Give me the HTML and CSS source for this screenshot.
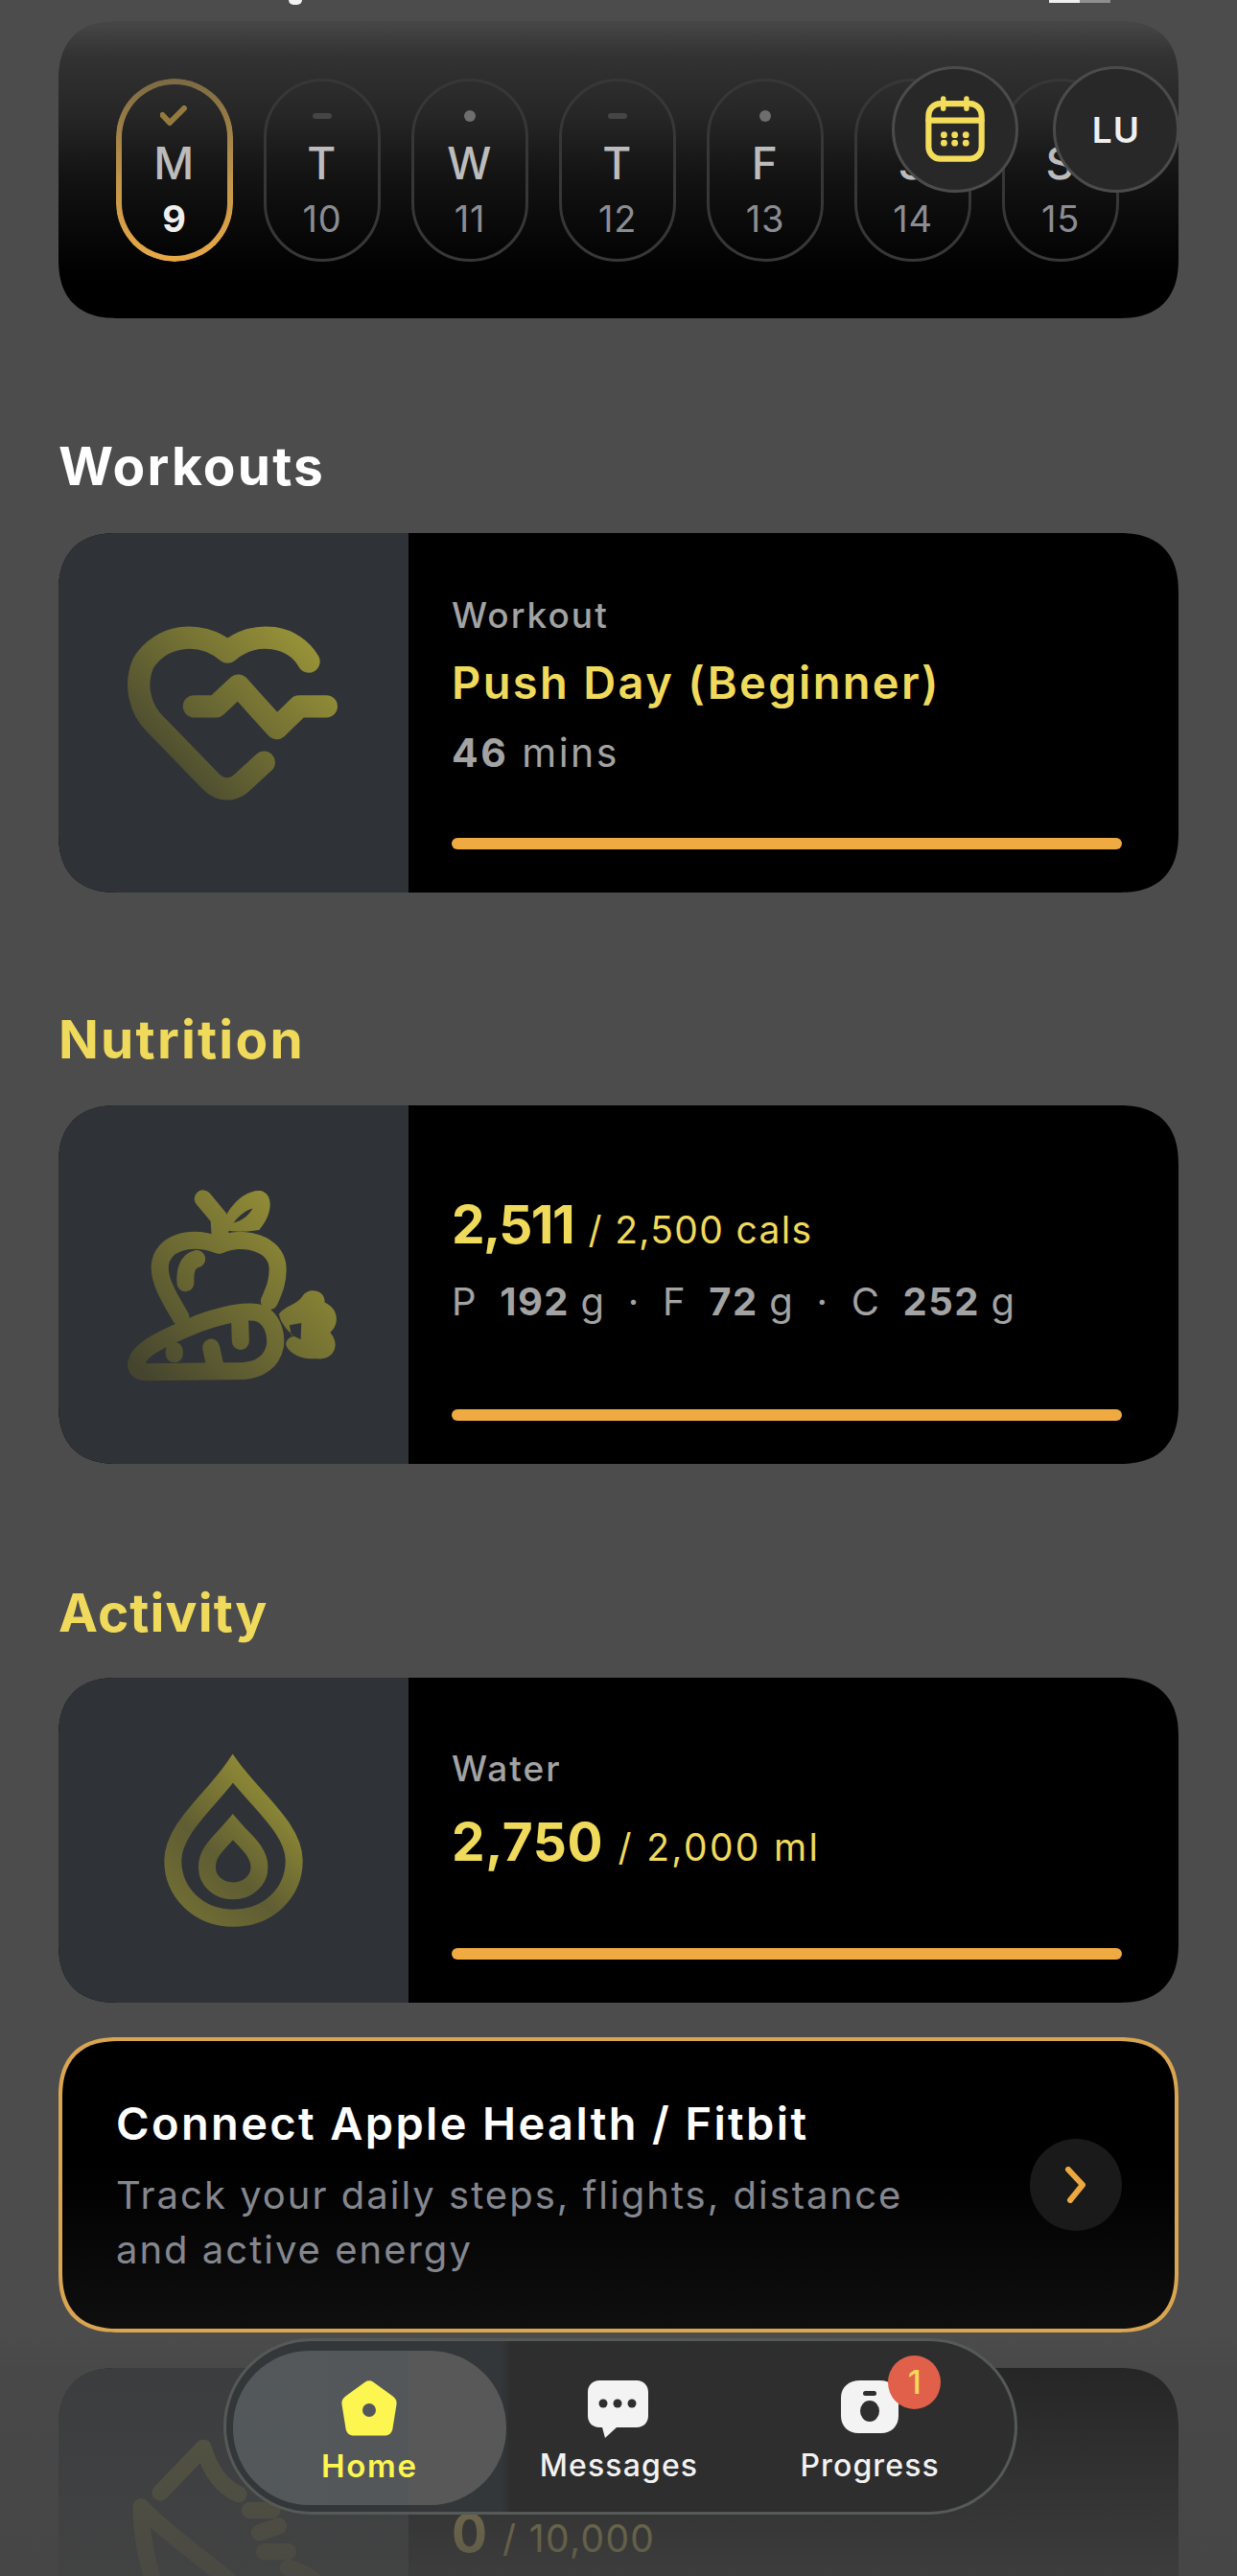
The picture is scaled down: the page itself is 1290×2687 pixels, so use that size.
FILE: index.html
```html
<!DOCTYPE html>
<html lang="en">
<head>
<meta charset="utf-8">
<title>Home</title>
<link rel="stylesheet" href="styles.css">
</head>
<body>
<div class="page">
  <svg width="0" height="0" class="defs" aria-hidden="true">
    <defs>
      <linearGradient id="oliveHeart" gradientUnits="userSpaceOnUse" x1="880" y1="400" x2="400" y2="860"><stop offset="0" stop-color="#9a9438"/><stop offset="1" stop-color="#44452f"/></linearGradient>
      <linearGradient id="oliveFood" gradientUnits="userSpaceOnUse" x1="800" y1="420" x2="330" y2="880"><stop offset="0" stop-color="#8f8a36"/><stop offset="1" stop-color="#45452f"/></linearGradient>
      <linearGradient id="oliveDrop" gradientUnits="userSpaceOnUse" x1="790" y1="430" x2="470" y2="760"><stop offset="0" stop-color="#8f8a36"/><stop offset="0.6" stop-color="#5f5d33"/><stop offset="1" stop-color="#6f6c34"/></linearGradient>
    </defs>
  </svg>

  <div class="status-a"></div><div class="status-b"></div><div class="status-c"></div>

  <main class="content">
    <section class="week">
      <div class="day day-active">
        <span class="day-mark"><svg width="30" height="22" viewBox="0 0 30 22"><path d="M2.500 10 L10 18 L25 3" class="check"/></svg></span>
        <span class="day-letter">M</span><span class="day-num day-num-active">9</span>
      </div>
      <div class="day"><span class="day-mark"><i class="dash"></i></span><span class="day-letter">T</span><span class="day-num">10</span></div>
      <div class="day"><span class="day-mark"><i class="dot"></i></span><span class="day-letter">W</span><span class="day-num">11</span></div>
      <div class="day"><span class="day-mark"><i class="dash"></i></span><span class="day-letter">T</span><span class="day-num">12</span></div>
      <div class="day"><span class="day-mark"><i class="dot"></i></span><span class="day-letter">F</span><span class="day-num">13</span></div>
      <div class="day"><span class="day-mark"></span><span class="day-letter">S</span><span class="day-num">14</span></div>
      <div class="day"><span class="day-mark"></span><span class="day-letter">S</span><span class="day-num">15</span></div>
    </section>

    <h2 class="heading heading-first">Workouts</h2>
    <article class="card card-workout">
      <div class="card-art">
        <svg class="art-heart" viewBox="270 330 680 560">
          <path class="art-line stroke-heart" d="M845 450 C800 370 680 345 592 420 C500 345 380 370 328 455 C300 520 315 600 370 650 L540 825 C570 855 610 855 640 825 L705 765"/>
          <path class="art-line stroke-heart" d="M487 590 H555 L625 525 L745 658 L815 590 H900"/>
        </svg>
      </div>
      <div class="card-body">
        <p class="label label-workout">Workout</p>
        <p class="title">Push Day (Beginner)</p>
        <p class="meta meta-mins"><b>46</b> mins</p>
        <div class="bar"></div>
      </div>
    </article>

    <h2 class="heading heading-gold heading-nutrition">Nutrition</h2>
    <article class="card card-nutrition">
      <div class="card-art">
        <svg class="art-food" viewBox="270 290 680 620">
          <g class="art-line stroke-food">
            <path d="M445 700 C410 640 378 590 380 540 C385 470 470 440 565 475 C640 440 745 470 748 545 C750 590 735 620 722 650"/>
            <path d="M515 330 L565 390 L570 470"/>
            <path d="M495 518 C465 525 458 560 460 593"/>
            <path d="M310 835 C320 800 400 760 500 720 C570 695 640 680 680 685 C730 695 745 750 740 790 C730 840 690 865 640 868 L340 872 C310 872 300 855 310 835 Z"/>
            <path d="M425 815 L425 805"/>
            <path d="M540 795 L552 850"/>
            <path d="M630 715 L632 775"/>
          </g>
          <path class="fill-food" fill-rule="evenodd" d="M570 425 C590 350 650 300 695 305 C735 315 735 375 690 428 C650 435 600 435 570 425 Z M610 405 C630 380 650 365 670 360 C655 385 635 400 610 405 Z"/>
          <path class="fill-food" fill-rule="evenodd" d="M752 690 C770 665 810 660 825 635 C845 605 898 615 895 655 C935 670 945 720 912 748 C945 785 925 835 870 830 C830 832 790 820 775 790 C770 775 785 760 800 760 C780 745 755 715 752 690 Z M785 725 L822 718 L820 770 L790 755 Z"/>
        </svg>
      </div>
      <div class="card-body">
        <p class="value value-nutrition"><b class="num-tight">2,511</b> <span>/ 2,500 cals</span></p>
        <p class="meta meta-macros">P&nbsp; <b>192</b> g &nbsp;·&nbsp; F&nbsp; <b>72</b> g &nbsp;·&nbsp; C&nbsp; <b>252</b> g</p>
        <div class="bar"></div>
      </div>
    </article>

    <h2 class="heading heading-gold heading-activity">Activity</h2>
    <article class="card card-water">
      <div class="card-art">
        <svg class="art-drop" viewBox="380 255 460 565">
          <path class="drop-line" d="M608 312 C540 410 420 500 420 600 C420 700 500 780 610 780 C720 780 800 700 800 600 C800 500 680 410 608 312 Z"/>
          <path class="drop-line" d="M608 495 C570 540 527 570 527 620 C527 665 565 695 608 695 C652 695 691 665 691 620 C691 570 646 540 608 495 Z"/>
        </svg>
      </div>
      <div class="card-body">
        <p class="label label-water">Water</p>
        <p class="value value-water"><b>2,750</b> <span>/ 2,000 ml</span></p>
        <div class="bar"></div>
      </div>
    </article>

    <article class="connect">
      <div class="connect-text">
        <p class="connect-title">Connect Apple Health / Fitbit</p>
        <p class="connect-sub">Track your daily steps, flights, distance<br>and active energy</p>
      </div>
      <div class="connect-go">
        <svg width="24" height="38" viewBox="0 0 24 38"><path class="chev" d="M4 3 L19 19 L6 35"/></svg>
      </div>
    </article>

    <article class="card card-steps">
      <div class="card-art card-art-top">
        <svg class="art-shoe" viewBox="389 345 680 672">
          <g class="art-line stroke-shoe">
            <path d="M500 510 L635 370 C655 440 690 490 745 515"/>
            <path d="M440 555 C520 640 640 720 720 790"/>
            <path d="M780 565 H850"/><path d="M810 635 L870 615"/><path d="M825 695 H900"/>
            <path d="M900 745 C950 760 1000 790 1020 830 C1050 900 1040 960 980 970 L640 970 C500 960 440 700 440 555"/>
          </g>
        </svg>
      </div>
      <div class="card-body">
        <p class="label label-steps">Steps</p>
        <p class="value value-steps"><b>0</b> <span>/ 10,000</span></p>
      </div>
    </article>
  </main>

  <div class="fade"></div>

  <button class="float float-cal" type="button" aria-label="Calendar">
    <svg width="64" height="70" viewBox="345 183 186 205">
      <rect x="357" y="207" width="162" height="168" rx="36" class="cal-line"/>
      <path d="M357 258 H519" class="cal-line"/>
      <path d="M402 192 V222 M473 192 V222" class="cal-line cal-ring"/>
      <g class="cal-dots"><circle cx="404" cy="302" r="10"/><circle cx="437" cy="302" r="10"/><circle cx="471" cy="302" r="10"/><circle cx="404" cy="327" r="10"/><circle cx="437" cy="327" r="10"/><circle cx="471" cy="327" r="10"/></g>
    </svg>
  </button>
  <button class="float float-user" type="button">LU</button>

  <nav class="nav">
    <a class="nav-item nav-home">
      <span class="nav-icon">
        <svg width="58" height="58" viewBox="0 0 58 58"><path class="home-shape" fill-rule="evenodd" d="M25 1.500 C27.500 -0.300 30.500 -0.300 33 1.500 L53 16 C56.500 18.500 58 21 57.500 25 L53.500 50 C52.800 55 49.500 57.500 45 57.500 L13 57.500 C8.500 57.500 5.200 55 4.500 50 L0.500 25 C0 21 1.500 18.500 5 16 Z M29 24 A7 7 0 1 0 29 38 A7 7 0 1 0 29 24 Z"/></svg>
      </span>
      <span class="nav-label nav-label-home">Home</span>
    </a>
    <a class="nav-item nav-msg">
      <span class="nav-icon">
        <svg width="64" height="60" viewBox="0 0 64 60"><path class="nav-white" d="M12 0 H51 C58 0 63 5 63 12 V37 C63 44 58 49 51 49 H30 L18 60 L15 49 H12 C5 49 0 44 0 37 V12 C0 5 5 0 12 0 Z"/><g class="nav-dark"><circle cx="16" cy="24" r="4.500"/><circle cx="31" cy="24" r="4.500"/><circle cx="46" cy="24" r="4.500"/></g></svg>
      </span>
      <span class="nav-label">Messages</span>
    </a>
    <a class="nav-item nav-progress">
      <span class="nav-icon">
        <svg width="60" height="55" viewBox="0 0 60 55"><path class="nav-white" d="M20 0 H40 C52 0 60 7 60 18 V37 C60 48 52 55 42 55 H18 C8 55 0 48 0 37 V18 C0 7 8 0 20 0 Z"/><g class="nav-dark"><rect x="23" y="11" width="14" height="5" rx="2.500"/><ellipse cx="30" cy="32" rx="10" ry="11"/></g></svg>
      </span>
      <span class="nav-label">Progress</span>
      <span class="badge">1</span>
    </a>
  </nav>
</div>
</body>
</html>
```
FILE: styles.css
```css
* { box-sizing: border-box; }
html, body { margin: 0; padding: 0; background: #4c4c4c; }
body { font-family: Inter, "Liberation Sans", sans-serif; }
p, h2 { margin: 0; }
.defs { position: absolute; }

.page { position: relative; width: 1290px; height: 2687px; overflow: hidden; background: #4c4c4c; }
.content { padding: 22px 61px 0; }

.status-a, .status-b, .status-c { position: absolute; top: 0; height: 3px; }
.status-a { left: 301px; width: 14px; height: 5px; background: #f2f2f2; border-radius: 0 0 6px 6px; }
.status-b { left: 1094px; width: 32px; background: #f0f0f0; }
.status-c { left: 1126px; width: 32px; background: #8e8e8e; }

/* week strip */
.week {
  height: 310px; padding: 60px 60px 0;
  display: flex; gap: 32px; align-items: flex-start;
  border-radius: 63px; corner-shape: superellipse(1.3);
  background: linear-gradient(180deg, #474747 0%, #323232 12%, #262626 32%, #141414 51%, #030303 80%, #000 86%);
}
.day {
  position: relative; width: 122px; height: 191px; flex: none;
  border-radius: 61px; border: 3px solid #373737;
  display: flex; flex-direction: column; align-items: center; padding-top: 25px;
}
.day-active { border-color: transparent; }
.day-active::before {
  content: ""; position: absolute; inset: -3px; border-radius: 61px; padding: 6px;
  background: linear-gradient(180deg, #7b6a44 0%, #c1954a 55%, #e8a946 100%);
  -webkit-mask: linear-gradient(#000 0 0) content-box, linear-gradient(#000 0 0);
  -webkit-mask-composite: xor; mask-composite: exclude;
}
.day-mark { height: 22px; display: flex; align-items: center; justify-content: center; }
.check { fill: none; stroke: #957a3e; stroke-width: 6; stroke-linecap: round; stroke-linejoin: round; }
.dash { display: block; width: 20px; height: 6px; border-radius: 3px; background: #454545; }
.dot { display: block; width: 12px; height: 12px; border-radius: 50%; background: #6e6e6e; }
.day-letter { margin-top: 16px; font-size: 46px; line-height: 44px; font-weight: 500; color: #bcbcbc; letter-spacing: .03em; }
.day-num { margin-top: 16px; font-size: 38px; line-height: 40px; font-weight: 400; color: #8c8d93; letter-spacing: .02em; }
.day-num-active { color: #efefef; font-weight: 700; }

/* headings */
.heading { font-size: 55px; line-height: 60px; font-weight: 700; color: #fff; letter-spacing: .04em; }
.heading-first { margin: 124px 0 40px; }
.heading-nutrition { margin: 123px 0 39px; }
.heading-activity { margin: 125px 0 38px; letter-spacing: .02em; }
.heading-gold { color: #f0da5c; }

/* cards */
.card {
  display: grid; grid-template-columns: 365px 1fr;
  background: #000; border-radius: 63px; corner-shape: superellipse(1.3); overflow: hidden;
}
.card-workout { height: 375px; }
.card-nutrition { height: 374px; }
.card-water { height: 339px; }
.card-steps { height: 374px; margin-top: 37px; }
.card-art { background: #2f3337; display: flex; align-items: center; justify-content: center; }
.art-heart { width: 227px; height: 187px; }
.art-food { width: 227px; height: 207px; }
.art-drop { width: 153px; height: 188px; }
.art-shoe { width: 227px; height: 224px; }
.art-line { fill: none; stroke-linecap: round; stroke-linejoin: round; }
.stroke-heart { stroke: url(#oliveHeart); stroke-width: 70; }
.stroke-food { stroke: url(#oliveFood); stroke-width: 54; }
.stroke-shoe { stroke: #6a683a; stroke-width: 52; }
.fill-food { fill: url(#oliveFood); }
.drop-line { fill: none; stroke: url(#oliveDrop); stroke-width: 54; stroke-linejoin: miter; stroke-miterlimit: 6; }

.card-body { display: flex; flex-direction: column; padding: 0 59px 45px 45px; color: #a6a6a6; }
.label { font-size: 37px; line-height: 40px; font-weight: 500; color: #a3a3a3; letter-spacing: .055em; }
.label-workout { margin-top: 66px; }
.label-water { margin-top: 75px; }
.label-steps { margin-top: 80px; font-size: 30px; letter-spacing: 0; }
.title { margin-top: 22px; font-size: 47px; line-height: 56px; font-weight: 600; color: #f0da5c; letter-spacing: .05em; }
.meta { font-size: 41px; line-height: 46px; font-weight: 400; color: #a3a3a3; letter-spacing: .06em; }
.meta b { font-weight: 700; }
.meta-mins { margin-top: 22px; }
.meta-macros { margin-top: 28px; white-space: pre; font-size: 40px; letter-spacing: .035em; word-spacing: -1px; }
.value { font-size: 55px; line-height: 60px; color: #f0da5c; white-space: nowrap; }
.value b { font-weight: 700; letter-spacing: .01em; }
.value .num-tight { letter-spacing: -.03em; }
.value span { font-size: 39px; line-height: 1; font-weight: 400; letter-spacing: .034em; }
.value-nutrition { margin-top: 94px; }
.value-water { margin-top: 26px; }
.value-water span { letter-spacing: .06em; }
.value-steps { margin-top: 22px; }
.bar { margin-top: auto; height: 12px; border-radius: 6px; background: #efaa42; flex: none; }

/* connect */
.connect {
  margin-top: 36px; height: 308px;
  display: flex; align-items: center; justify-content: space-between;
  padding: 0 55px 0 56px;
  border: 4px solid #d9a550; border-radius: 63px; corner-shape: superellipse(1.3);
  background: linear-gradient(180deg, #000 0%, #000 45%, #0f0f0f 100%);
}
.connect-text { padding-top: 3px; }
.connect-title { font-size: 47px; line-height: 56px; font-weight: 600; color: #fff; letter-spacing: .05em; }
.connect-sub { margin-top: 18px; font-size: 40px; line-height: 57px; font-weight: 400; color: #85878f; letter-spacing: .05em; }
.connect-go { width: 96px; height: 96px; border-radius: 50%; background: #1a1a1a; display: flex; align-items: center; justify-content: center; flex: none; }
.chev { fill: none; stroke: #eda93f; stroke-width: 6; stroke-linecap: round; stroke-linejoin: round; }

/* bottom fade */
.fade { position: absolute; left: 0; right: 0; top: 2434px; bottom: 0; background: linear-gradient(180deg, rgba(69,69,69,.02) 0%, rgba(69,69,69,.55) 15%, rgba(69,69,69,.88) 100%); }

/* floating */
.float {
  position: absolute; top: 69px; width: 132px; height: 132px; padding: 0;
  border-radius: 50%; border: 3px solid #4b4b4b; background: #282828;
  display: flex; align-items: center; justify-content: center;
  font-family: inherit; font-size: 37px; font-weight: 600; color: #efefef; letter-spacing: .03em;
}
.float-cal { left: 930px; }
.float-user { left: 1098px; }
.cal-line { fill: none; stroke: #f3dd5a; stroke-width: 18; stroke-linecap: round; }
.cal-ring { stroke-width: 16; }
.cal-dots { fill: #f3dd5a; }

/* nav */
.nav {
  position: absolute; left: 233px; top: 2439px; width: 828px; height: 184px;
  display: flex; padding: 10px 7px;
  border-radius: 92px; border: 3px solid #555a58;
  background: linear-gradient(90deg, #33373a 0%, #33373a 35%, #2e2e2e 36%, #2e2e2e 100%);
}
.nav-item { position: relative; display: flex; flex-direction: column; align-items: center; padding-top: 31px; height: 161px; }
.nav-home {
  width: 285px; border-radius: 80px;
  background: linear-gradient(90deg, #53585b 0%, #54575a 64%, #585858 65%, #585858 100%);
}
.nav-msg { width: 236px; }
.nav-progress { width: 288px; }
.nav-icon { height: 60px; display: flex; align-items: flex-start; justify-content: center; }
.nav-label { margin-top: 9px; font-size: 32px; line-height: 40px; font-weight: 500; color: #f2f2f2; letter-spacing: .035em; }
.nav-label-home { color: #fdf650; font-weight: 600; font-size: 33px; letter-spacing: .05em; }
.home-shape { fill: #fdf650; }
.nav-white { fill: #f3f3f3; }
.nav-dark { fill: #2e2e2e; }
.badge {
  position: absolute; left: 163px; top: 5px; width: 55px; height: 56px; border-radius: 50%;
  background: #e0604a; color: #f5d85a; font-size: 34px; line-height: 56px; font-weight: 500; text-align: center;
}
```
